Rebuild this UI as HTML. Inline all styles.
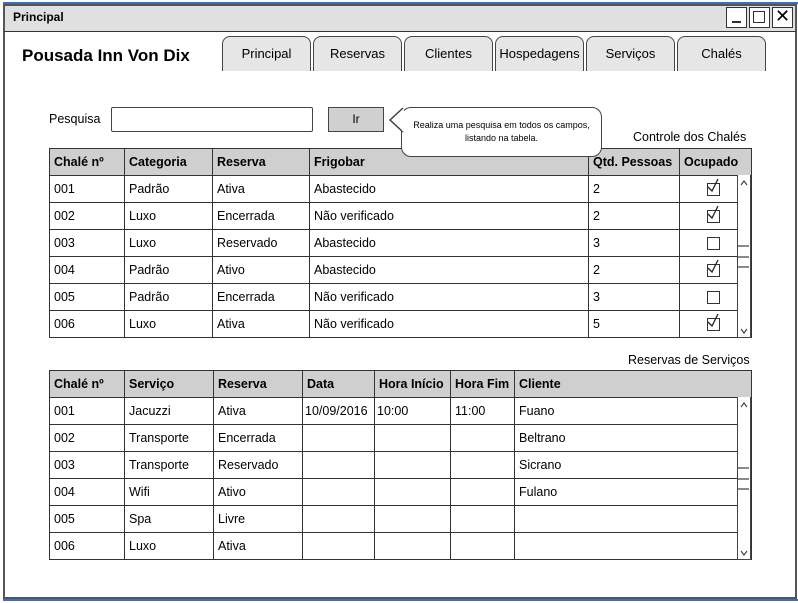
<!DOCTYPE html>
<html><head><meta charset="utf-8"><style>
*{margin:0;padding:0;box-sizing:border-box}
body{width:798px;height:603px;background:#fff;position:relative;overflow:hidden;font-family:"Liberation Sans",sans-serif;font-size:12px;color:#000}
.a{position:absolute}
.win{left:3px;top:4px;width:794px;height:595px;border:2px solid #555;background:#fff}
.tb{left:3px;top:4px;width:794px;height:28px;background:#e0e0e0;border:2px solid #555;border-bottom:1px solid #333}
.wb{top:7px;width:21px;height:21px;border:1.5px solid #333;background:#fff}
.tab{top:36px;height:35px;border:1.5px solid #444;border-bottom:none;border-radius:8px 8px 0 0;background:#e6e6e6;text-align:center;font-size:13px;line-height:34px}
table{position:absolute;border-collapse:collapse;table-layout:fixed}
td{border:1.5px solid #333;height:27px;padding:0 4px;font-size:12.5px;white-space:nowrap;overflow:hidden}
th{border:1.5px solid #333;height:27px;padding:0 4px;font-size:12.5px;text-align:left;background:#cfcfcf;font-weight:bold}
.cb{display:inline-block;width:13px;height:13px;border:1.3px solid #333;position:relative;vertical-align:middle;font-size:0}
.sb{width:14px;background:#fff;border:1.5px solid #444;border-top:none}
</style></head><body>
<div class="a win"></div>
<div class="a" style="left:3px;top:2px;width:795px;height:2px;background:#3b6fb8"></div>
<div class="a" style="left:3px;top:599px;width:795px;height:2px;background:#3b6fb8"></div>
<div class="a tb"></div>
<div class="a" style="left:13px;top:10px;font-weight:bold;font-size:12px">Principal</div>
<div class="a wb" style="left:726px"><div class="a" style="left:5px;top:13px;width:9px;height:1.5px;background:#333"></div></div>
<div class="a wb" style="left:749px"><div class="a" style="left:3px;top:3px;width:12px;height:12px;border:1.5px solid #333"></div></div>
<div class="a wb" style="left:772px;font-size:18px;line-height:17px;text-align:center">✕</div>
<div class="a" style="left:22px;top:46px;font-weight:bold;font-size:17px">Pousada Inn Von Dix</div>
<div class="a tab" style="left:222px;width:89px">Principal</div>
<div class="a tab" style="left:313px;width:89px">Reservas</div>
<div class="a tab" style="left:404px;width:89px">Clientes</div>
<div class="a tab" style="left:495px;width:89px">Hospedagens</div>
<div class="a tab" style="left:586px;width:89px">Serviços</div>
<div class="a tab" style="left:677px;width:89px">Chalés</div>
<div class="a" style="left:49px;top:112px;font-size:12.5px">Pesquisa</div>
<div class="a" style="left:111px;top:107px;width:202px;height:25px;border:1.5px solid #444;border-radius:2px"></div>
<div class="a" style="left:328px;top:107px;width:56px;height:25px;border:1.5px solid #444;background:#d0d0d0;text-align:center;line-height:23px;font-size:12px">Ir</div>
<div class="a" style="left:633px;top:130px;font-size:12.5px">Controle dos Chalés</div>
<table style="left:49px;top:148px;width:702px">
<colgroup><col style="width:75px"><col style="width:88px"><col style="width:97px"><col style="width:279px"><col style="width:91px"><col style="width:72px"></colgroup>
<tr><th>Chalé nº</th><th>Categoria</th><th>Reserva</th><th>Frigobar</th><th>Qtd. Pessoas</th><th>Ocupado</th></tr>
<tr><td>001</td><td>Padrão</td><td>Ativa</td><td>Abastecido</td><td>2</td><td style="padding-left:27px"><span class="cb"></span></td></tr>
<tr><td>002</td><td>Luxo</td><td>Encerrada</td><td>Não verificado</td><td>2</td><td style="padding-left:27px"><span class="cb"></span></td></tr>
<tr><td>003</td><td>Luxo</td><td>Reservado</td><td>Abastecido</td><td>3</td><td style="padding-left:27px"><span class="cb"></span></td></tr>
<tr><td>004</td><td>Padrão</td><td>Ativo</td><td>Abastecido</td><td>2</td><td style="padding-left:27px"><span class="cb"></span></td></tr>
<tr><td>005</td><td>Padrão</td><td>Encerrada</td><td>Não verificado</td><td>3</td><td style="padding-left:27px"><span class="cb"></span></td></tr>
<tr><td>006</td><td>Luxo</td><td>Ativa</td><td>Não verificado</td><td>5</td><td style="padding-left:27px"><span class="cb"></span></td></tr>
</table>
<div class="a" style="z-index:5;left:401px;top:107px;width:201px;height:50px;border:1.5px solid #444;border-radius:10px;background:#fff;text-align:center;font-size:9px;line-height:13px;padding-top:11px">Realiza uma pesquisa em todos os campos,<br>listando na tabela.</div>
<svg class="a" style="left:388px;top:106px;z-index:6" width="16" height="30"><path d="M15 2 L2 14 L15 26" fill="#fff" stroke="#444" stroke-width="1.5"/><rect x="14" y="4" width="3" height="21" fill="#fff"/></svg>
<svg class="a" style="left:705px;top:178px" width="20" height="160">
<path d="M3 9 L7 13 L13 1" fill="none" stroke="#222" stroke-width="1.3"/>
<path d="M3 9 L7 13 L13 1" fill="none" stroke="#222" stroke-width="1.3" transform="translate(0,27)"/>
<path d="M3 9 L7 13 L13 1" fill="none" stroke="#222" stroke-width="1.3" transform="translate(0,81)"/>
<path d="M3 9 L7 13 L13 1" fill="none" stroke="#222" stroke-width="1.3" transform="translate(0,135)"/>
</svg>
<div class="a sb" style="left:737px;top:175px;height:163px"></div>
<svg class="a" style="left:737px;top:175px" width="16" height="163"><path d="M4 10 L7 6 L10 10 M4 154 L7 158 L10 154 M1 71 H12 M1 82 H12 M1 92 H12" fill="none" stroke="#444" stroke-width="1.2"/></svg>
<div class="a" style="left:628px;top:353px;font-size:12.5px">Reservas de Serviços</div>
<table style="left:49px;top:370px;width:702px">
<colgroup><col style="width:75px"><col style="width:89px"><col style="width:89px"><col style="width:72px"><col style="width:76px"><col style="width:64px"><col style="width:237px"></colgroup>
<tr><th>Chalé nº</th><th>Serviço</th><th>Reserva</th><th>Data</th><th>Hora Início</th><th>Hora Fim</th><th>Cliente</th></tr>
<tr><td>001</td><td>Jacuzzi</td><td>Ativa</td><td style="padding:0 2px">10/09/2016</td><td style="padding:0 2px">10:00</td><td>11:00</td><td>Fuano</td></tr>
<tr><td>002</td><td>Transporte</td><td>Encerrada</td><td></td><td></td><td></td><td>Beltrano</td></tr>
<tr><td>003</td><td>Transporte</td><td>Reservado</td><td></td><td></td><td></td><td>Sicrano</td></tr>
<tr><td>004</td><td>Wifi</td><td>Ativo</td><td></td><td></td><td></td><td>Fulano</td></tr>
<tr><td>005</td><td>Spa</td><td>Livre</td><td></td><td></td><td></td><td></td></tr>
<tr><td>006</td><td>Luxo</td><td>Ativa</td><td></td><td></td><td></td><td></td></tr>
</table>
<div class="a sb" style="left:737px;top:397px;height:163px"></div>
<svg class="a" style="left:737px;top:397px" width="16" height="163"><path d="M4 10 L7 6 L10 10 M4 154 L7 158 L10 154 M1 71 H12 M1 82 H12 M1 92 H12" fill="none" stroke="#444" stroke-width="1.2"/></svg>
</body></html>
